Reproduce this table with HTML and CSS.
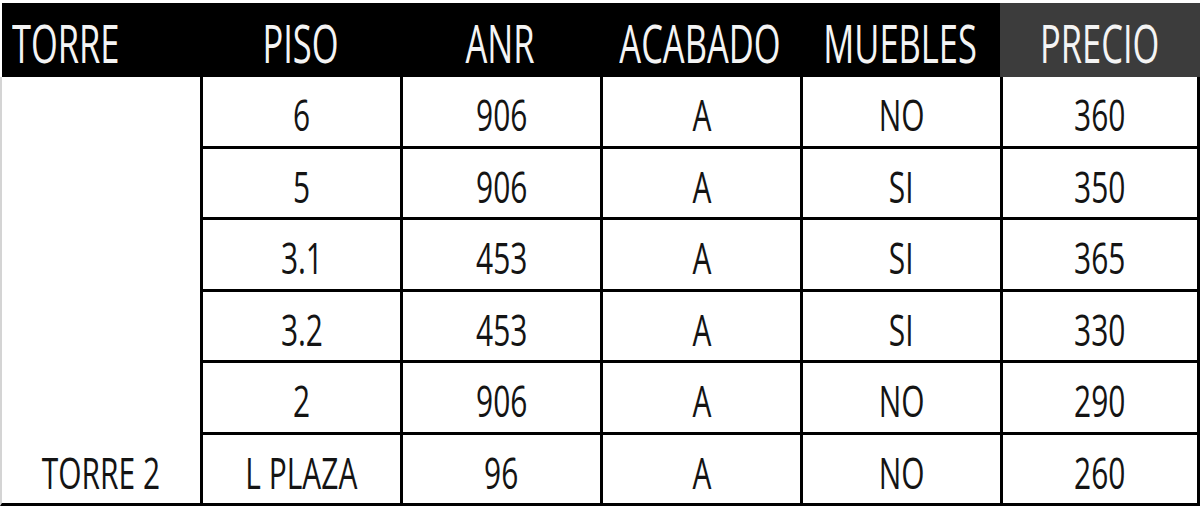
FILE: index.html
```html
<!DOCTYPE html>
<html lang="es">
<head>
<meta charset="utf-8">
<title>Torre 2 - Precios</title>
<link rel="stylesheet" href="styles.css">
</head>
<body>
<div class="sheet">
  <div class="hcell first"><span class="htxt left">TORRE</span></div>
  <div class="hcell"><span class="htxt">PISO</span></div>
  <div class="hcell"><span class="htxt">ANR</span></div>
  <div class="hcell"><span class="htxt">ACABADO</span></div>
  <div class="hcell"><span class="htxt">MUEBLES</span></div>
  <div class="hcell price"><span class="htxt">PRECIO</span></div>

  <div class="cell tower"></div>
  <div class="cell data second"><span class="txt">6</span></div>
  <div class="cell data"><span class="txt">906</span></div>
  <div class="cell data"><span class="txt">A</span></div>
  <div class="cell data"><span class="txt">NO</span></div>
  <div class="cell data last"><span class="txt">360</span></div>

  <div class="cell tower"></div>
  <div class="cell data second"><span class="txt">5</span></div>
  <div class="cell data"><span class="txt">906</span></div>
  <div class="cell data"><span class="txt">A</span></div>
  <div class="cell data"><span class="txt">SI</span></div>
  <div class="cell data last"><span class="txt">350</span></div>

  <div class="cell tower"></div>
  <div class="cell data second"><span class="txt">3.1</span></div>
  <div class="cell data"><span class="txt">453</span></div>
  <div class="cell data"><span class="txt">A</span></div>
  <div class="cell data"><span class="txt">SI</span></div>
  <div class="cell data last"><span class="txt">365</span></div>

  <div class="cell tower"></div>
  <div class="cell data second"><span class="txt">3.2</span></div>
  <div class="cell data"><span class="txt">453</span></div>
  <div class="cell data"><span class="txt">A</span></div>
  <div class="cell data"><span class="txt">SI</span></div>
  <div class="cell data last"><span class="txt">330</span></div>

  <div class="cell tower"></div>
  <div class="cell data second"><span class="txt">2</span></div>
  <div class="cell data"><span class="txt">906</span></div>
  <div class="cell data"><span class="txt">A</span></div>
  <div class="cell data"><span class="txt">NO</span></div>
  <div class="cell data last"><span class="txt">290</span></div>

  <div class="cell tower bottom"><span class="txt">TORRE 2</span></div>
  <div class="cell data second"><span class="txt">L PLAZA</span></div>
  <div class="cell data"><span class="txt">96</span></div>
  <div class="cell data"><span class="txt">A</span></div>
  <div class="cell data"><span class="txt">NO</span></div>
  <div class="cell data last"><span class="txt">260</span></div>
</div>
</body>
</html>
```

FILE: styles.css
```css
html, body {
  margin: 0;
  padding: 0;
  background: #ffffff;
}

body {
  width: 1200px;
  height: 507px;
  overflow: hidden;
  font-family: "Open Sans", "Liberation Sans", sans-serif;
}

.sheet {
  margin-top: 3px;
  display: grid;
  grid-template-columns: repeat(6, 200px);
  grid-template-rows: 74px repeat(6, 71.5px);
}

.hcell {
  background: #000000;
  display: flex;
  align-items: center;
  justify-content: center;
  overflow: visible;
}

.hcell.first {
  justify-content: flex-start;
  border-left: 2px solid #ffffff;
  padding-left: 10px;
}

.hcell.price {
  background: #3c3c3c;
}

.htxt {
  display: inline-block;
  color: #f4f4f4;
  font-size: 53px;
  line-height: 1;
  white-space: nowrap;
  transform: scaleX(0.65);
  padding-top: 4px;
}

.htxt.left {
  transform-origin: left center;
}

.cell {
  box-sizing: border-box;
  display: flex;
  align-items: center;
  justify-content: center;
  overflow: visible;
}

.cell.tower {
  border-left: 2px solid #d4d4d4;
}

.cell.tower.bottom {
  border-bottom: 3px solid #000000;
}

.cell.data {
  border-left: 3px solid #000000;
  border-bottom: 3px solid #000000;
}

.cell.data.last {
  border-right: 3px solid #000000;
}

.txt {
  display: inline-block;
  color: #141414;
  font-size: 44px;
  line-height: 1;
  white-space: nowrap;
  transform: scaleX(0.68);
  padding-top: 6px;
}
```
